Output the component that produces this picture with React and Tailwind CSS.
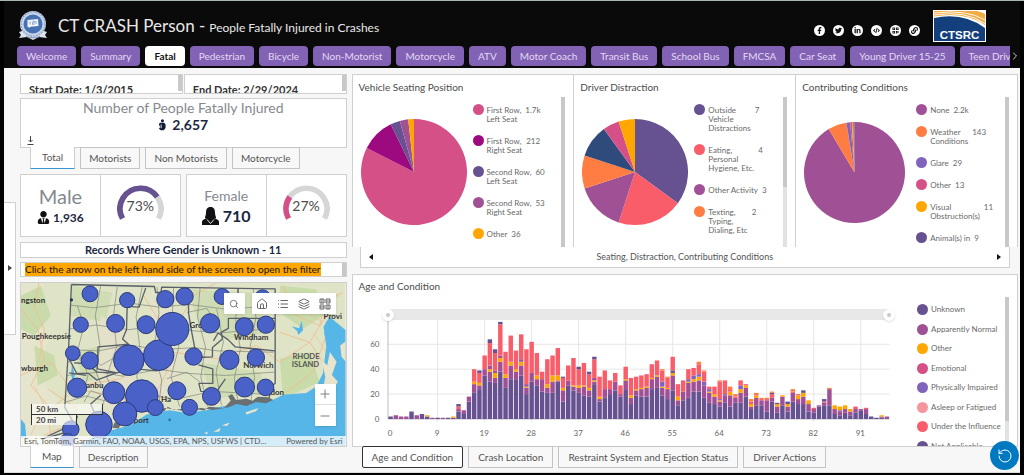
import React from "react";
import {
  FaFacebookF,
  FaTwitter,
  FaLinkedinIn,
  FaCode,
  FaQrcode,
  FaLink,
  FaUserTie,
} from "react-icons/fa";
import { Search, House, List, Layers, Plus, Minus, RotateCcw, ChevronRight } from "lucide-react";

const NAV = [
  "Welcome", "Summary", "Fatal", "Pedestrian", "Bicycle", "Non-Motorist", "Motorcycle", "ATV",
  "Motor Coach", "Transit Bus", "School Bus", "FMCSA", "Car Seat", "Young Driver 15-25", "Teen Drivers",
];

const PINK = "#d45087";
const PURPLE = "#665191";
const PLUM = "#a05195";
const RED = "#f95d6a";
const ORANGE = "#ff7c43";
const AMBER = "#ffa600";
const NAVY = "#2f4b7c";
const VIOLET = "#8064bb";

const SEATING = [
  { label: "First Row,\nLeft Seat", value: 1700, shown: "1.7k", color: PINK },
  { label: "First Row,\nRight Seat", value: 212, color: "#9d0a7f" },
  { label: "Second Row,\nLeft Seat", value: 60, color: PURPLE },
  { label: "Second Row,\nRight Seat", value: 53, color: PLUM },
  { label: "Other", value: 36, color: AMBER },
];
const DISTRACTION = [
  { label: "Outside\nVehicle\nDistractions", value: 7, color: PURPLE },
  { label: "Eating,\nPersonal\nHygiene, Etc.", value: 4, color: RED },
  { label: "Other Activity", value: 3, color: PLUM },
  { label: "Texting,\nTyping,\nDialing, Etc", value: 2, color: ORANGE },
  { value: 2, color: NAVY },
  { value: 1, color: PINK },
  { value: 1, color: AMBER },
];
const CONTRIBUTING = [
  { label: "None", value: 2200, shown: "2.2k", color: PLUM },
  { label: "Weather\nConditions", value: 143, color: ORANGE },
  { label: "Glare", value: 29, color: VIOLET },
  { label: "Other", value: 13, color: PINK },
  { label: "Visual\nObstruction(s)", value: 11, color: AMBER },
  { label: "Animal(s) in", value: 9, color: PURPLE },
];

const CONDITIONS = [
  ["Unknown", PURPLE],
  ["Apparently Normal", PLUM],
  ["Other", AMBER],
  ["Emotional", PINK],
  ["Physically Impaired", VIOLET],
  ["Asleep or Fatigued", "#f5969c"],
  ["Under the Influence", RED],
  ["Not Applicable", PURPLE],
];

/* One entry per age; each letter is a condition followed by its count. */
const AGES = (
  "d2 m3 m2 m2 d6 m3 d4 d2o1 m1 d1 m1 d1 d1o1 d6m2r2d2 d4m3 d14m4 d21m7o2r10 d24m3o2r8d2 d35m5r11 d30m8o2m3r18d3 " +
  "d29m4o4m2r14d3 d38m8o3m2r25d2 d25m8o3r18 d32m11o3r21 d32m6o2r15 d35m8o3m2r20 d20m5o1m2r28 d30m7r25 d27m5o3r18 d22m10r6 " +
  "d21m4o3r20 d21m9o5r16 d30m1o4r22 d14m9o2r8d1 d27m4r12 d23m3o1r22 d21m4o2r13d2 d19m7o1r18 d18m5o2r11d2 d28m2o1m2r15d2 " +
  "d14m2o2r16 d17m7r15 d20m4r7 d23m7r7 d18m2r7 d24m7o1r10 d12m5o2r14 d19m4o1r10 d18m6o1r10 d18m7o1r10 " +
  "d24m8o1r11 d25m9o1r12 d19m6o1v4r9h1 d16m8o1r8h1 d23m12o2d2r11 d11m4o3r10 d15m7r9 d17m12o1v2r8 d22m8o2v3r6 d22m9o3v2r8h2 " +
  "d17m10v3r8h1 d13m8o1v2r2 d12m6o2r6 d10m4o1v1r14h1 d13m6v1r11 d10m9o3r2h2 d13m4r1h2 d13m8o3v3r4 d18m7o2r1 d8m2o2r2h2 " +
  "d11m6o2r1h1 d11m4r1h1 d6m9r1h1 d14m3r3d1h1 d5m5o2d1 d11m7o1 d6m4o2d2 d14m7r1h2 d12m4o3r1 d12m6o3d2 " +
  "d6m6o3 d5m3r1 d10m1 d11m2r1d2 d11m13h1 d4m4o3 d3m3d1o3 d5m3o3 d3m3o2 d5m3r2 d7m1 d4m4r1 d2 d1 d1m1o1 m2"
).split(" ");
const BAR_COLORS = { d: PURPLE, m: PLUM, o: AMBER, r: RED, v: VIOLET, h: ORANGE };

const BUBBLES = [
  [268, 54, 24], [380, 73, 23], [495, 70, 26], [553, 62, 26], [666, 62, 24], [788, 66, 24], [240, 147, 23],
  [345, 143, 27], [437, 147, 27], [630, 143, 29], [733, 153, 27], [798, 147, 26], [216, 233, 22], [267, 255, 26],
  [385, 254, 46], [475, 239, 46], [516, 160, 50], [580, 243, 26], [688, 253, 29], [768, 246, 26], [229, 337, 29],
  [340, 352, 33], [424, 362, 49], [530, 346, 27], [634, 363, 27], [734, 335, 30], [797, 336, 25], [465, 397, 24],
  [568, 396, 24], [373, 416, 36], [295, 448, 40], [210, 462, 25], [200, 497, 22],
];

function Pie({ data, size, label }) {
  const total = data.reduce((s, d) => s + d.value, 0);
  let acc = 0;
  const point = (f) => [50 + 50 * Math.sin(2 * Math.PI * f), 50 - 50 * Math.cos(2 * Math.PI * f)];
  return (
    <svg viewBox="0 0 100 100" className={size} role="img" aria-label={label}>
      {data.map((d, i) => {
        const [x1, y1] = point(acc / total);
        acc += d.value;
        const [x2, y2] = point(acc / total);
        const large = d.value / total > 0.5 ? 1 : 0;
        return <path key={i} fill={d.color} d={`M50 50L${x1} ${y1}A50 50 0 ${large} 1 ${x2} ${y2}Z`} />;
      })}
    </svg>
  );
}

function PieCard({ title, data, size, short }) {
  return (
    <section className="flex h-[172px] min-w-0 flex-1 flex-col border-r border-[#cfcfcf] pr-2">
      <h2 className="h-[22px] pt-1 pl-[6px] text-[10px] leading-4 text-[#4c4c4c]">{title}</h2>
      <div className="flex min-h-0 flex-1">
        <div className="flex w-[120px] shrink-0 items-center pl-2">
          <Pie data={data} size={size} label={title} />
        </div>
        <ul className="flex flex-1 flex-col gap-[13px] overflow-hidden pt-[7px]">
          {data.filter((d) => d.label).map((d) => (
            <li key={d.label} className="flex shrink-0 items-start gap-[3px] text-[8px] leading-[9px] text-[#6a6a6a]">
              <span className="-mb-[2px] size-[11px] shrink-0 rounded-full" style={{ background: d.color }} />
              <span className="-mb-[2px] flex gap-1 pt-[2px]">
                <span className="whitespace-pre">{d.label}</span>
                <span>{d.shown || d.value}</span>
              </span>
            </li>
          ))}
        </ul>
        <div className="w-1 shrink-0 bg-[#e2e2e2]">
          <div className={short ? "h-3/5 bg-[#c8c8c8]" : "h-full bg-[#c8c8c8]"} />
        </div>
      </div>
    </section>
  );
}

function Gauge({ value, color }) {
  const arc = "M5.5 34.5A20.5 20.5 0 1 1 41.5 34.5";
  return (
    <div className="relative flex flex-1 items-center justify-center">
      <svg viewBox="0 0 47 47" className="mt-1 w-[47px]" fill="none" strokeWidth="5.6">
        <path d={arc} stroke="#d6d6d6" />
        <path d={arc} stroke={color} pathLength="100" strokeDasharray={`${value} 100`} />
      </svg>
      <span className="absolute text-sm text-[#4c4c4c]">{value}%</span>
    </div>
  );
}

function Tabs({ items, active, focused }) {
  return (
    <div role="tablist" className="relative -mt-px flex gap-[5px] pl-[10px]">
      {items.map((t) => {
        const on = t === active;
        return (
          <button
            key={t}
            role="tab"
            aria-selected={on}
            className={
              "h-[22px] whitespace-nowrap text-[10px] text-[#555] " +
              (focused ? "px-[9px] " : on ? "px-[11px] " : "px-2 ") +
              (on && focused
                ? "rounded-[2px] border border-[#333] bg-white"
                : on
                ? "border-x border-b border-x-[#cfcfcf] border-b-[#3b95cf] bg-white"
                : "border border-[#c4c4c4] bg-[#f8f8f8]")
            }
          >
            {t}
          </button>
        );
      })}
    </div>
  );
}

function BasemapIcon({ className }) {
  return (
    <svg viewBox="0 0 12 12" className={className} fill="none" stroke="currentColor" strokeWidth="1">
      <path d="M1 1h4v4H1zM7 1h4v4H7zM1 7h4v4H1zM7 7h4v4H7zM3 1v4M7 3h4M1 9h4M9 7v4" />
    </svg>
  );
}

function MapDrawing() {
  return (
    <svg viewBox="60 21 978 492" preserveAspectRatio="xMidYMid slice" className="absolute inset-0 size-full" role="img" aria-label="Crashes by area in Connecticut">
      <rect x="60" y="21" width="978" height="492" fill="#dfe4c6" />
      <path d="M60 21h70l-20 90 30 80-20 120 50 60-30 142H60z" fill="#e4e5cc" />
      <path d="M60 60l60-30 30 90-50 60-40-20zM100 210l60 30 10 60-60 30zM840 30l110 10 20 80-60 40-70-50z" fill="#c9dbaa" />
      <path d="M215 30l120 20-20 90-110-20zM560 40l200 10 50 120-120 20-90-40zM220 230l80-20 60 90-110 20zM600 260l180 30 30 60-170 20z" fill="#d0dcb4" />
      <path d="M300 120l90 50 20 180-60 80-60-60zM450 60l70 50 20 240-80 40z" fill="#e3e1c9" />
      <path d="M840 250l90-20 30 90-110 50z" fill="#c8dba9" />
      <g fill="none" stroke="#f3bd91" strokeWidth="3" opacity=".9">
        <path d="M60 100l50 60 20 90-40 80 50 60 10 100M115 21l-15 70 30 70-15 90M60 300l90-40 60 80 130 20 90 40M150 400l90-70 120-20 130-90 90-160 70-40" />
        <path d="M430 60l60 100 30 80-40 90-70 70M520 230l130 20 120-40 70 50 90-60 50-80M850 30l40 90 70 30 20-80 50-20M840 170l90 30 40 60M860 350l80-60 40-110M140 340l90 60-30 50-70 30" />
        <path d="M860 50l60 20 100-10M880 80l90 60M940 170l40 60M100 330l30 60-40 90" strokeWidth="2" />
      </g>
      <g fill="#56b6e8">
        <path d="M240 513l30-23 60-24 60-16 48-32 70-13 50 8 60-8 50-12 60-10 92-10 30-15 70-5 30-20 20-40 10-80-8-60 18-30 48 40v350z" />
        <path d="M60 432l12 14 4 40-16 2zM214 262l8 40-6 22-5-30zM876 152l22 6 8-22 4 28-14 14-4-12z" />
        <path d="M980 135l12 30 18 10 18 28-20 20-24-10-10-40z" />
      </g>
      <path d="M967 255l16 14 8-40 20 30-14 40 18 20-26 40-20-14 8-40zM1022 210l16-12v60l-12-14zM736 412l40-14-8 10-28 10zM640 470l22-12-5 12zM665 450l24-8-8 10zM612 474l10-5v8z" fill="#e9e4cc" />
      <g fill="none" stroke="#7d8278" strokeWidth="2">
        <path d="M210 88l70 8 106-14 90 12 90-8 110 14 148-10M206 160l80-12 100 14 60-8 120 10 90 8 166-14M203 222l90 4 90-18 100 14 100-6 70 10 168 4M196 300l100-10 70 12 110-20 90 12 110 6 148-10M196 380l60-18 80 20 80-30 110 20 110-24 180 10" />
        <path d="M300 30l-16 90 14 90-12 80 30 70-20 60M350 34l-12 90 10 90-30 90 40 90M425 34l-18 90 12 100-10 80 20 80M470 34l6 80-16 110 24 90-10 90M520 34l-4 90 20 90-24 90 26 90M600 34l-8 90 24 90-14 90 20 90M650 100l20 100-22 90 16 100M760 36l8 90-18 90 14 90-12 76M715 40l-8 90 14 90-18 90 12 76" />
        <path d="M200 260l70-20 30 30 60-34M230 90l20 60-18 70 30 80-16 60M560 110l60-12 22 34M500 310l60-20 40 30M250 380l20-34 60 20" />
      </g>
      <g fill="none" stroke="#596069" strokeWidth="4" strokeLinejoin="round">
        <path d="M212 26l250 6 4 18 16 0 2-16 342 5v285l-12 8-6 36M212 26l-8 180-12 190 38 66-100 28" />
        <path d="M436 36l-20 58-36-2-2 70-12 28 18 16-92 8-2 66 60 12-60-2-36-26-34-2M206 252l22 42 36 0 24 20 60-22 60-12 60 6 30-8" />
        <path d="M565 36v76l10 60 12 62 8 12 42-2 0-28 30-26-4-20 22-12v-30h142M640 196l14-24 30 20 22 22 120 12M595 268l43 12v44h-42l6 24 46 2 28-40M300 360l-30 26 16 38M205 292l52 8M714 38v40" />
        <path d="M130 488l94-44 6-22" />
      </g>
      <path d="M440 412l28-10 24 6 10-14 20 10 40-6 50 8 14-12 46 4 20-22-8-14 12-6 12 18 32-4 18 6 16-12 32 2 14 8-22 10-30-4-28 12-30-6-24 10-48 8-34-6-60 8-50-8-30 14zM335 458l8-18 12 4 10-10-10 26z" fill="#6a6f72" />
      <g fill="#333" fontFamily="Lato, sans-serif" fontSize="24" fontWeight="700">
        <text x="60" y="81">ngston</text>
        <text x="62" y="191">Poughkeepsie</text>
        <text x="60" y="288">wburgh</text>
        <text x="256" y="339">anbu</text>
        <text x="568" y="158">Gro</text>
        <text x="702" y="192">Windham</text>
        <text x="730" y="277">Norwich</text>
        <text x="482" y="379">Ha</text>
        <text x="812" y="359">don</text>
        <text x="400" y="442">port</text>
        <text x="972" y="129">Provi</text>
      </g>
      <g fill="#555" fontFamily="Lato, sans-serif" fontSize="23" fontWeight="700">
        <text x="878" y="250">RHODE</text>
        <text x="876" y="275">ISLAND</text>
      </g>
      <circle cx="212" cy="72" r="5" fill="#26315e" />
      <circle cx="508" cy="434" r="4" fill="#2e6fb0" />
      {BUBBLES.map(([x, y, r], i) => (
        <circle key={i} cx={x} cy={y} r={r} fill="#4a62c8" stroke="#2b3a78" strokeWidth="3" />
      ))}
    </svg>
  );
}

function AgeChart() {
  const pitch = 504 / 96;
  return (
    <svg viewBox="0 0 504 99" preserveAspectRatio="none" className="block h-[99px] w-full overflow-visible" role="img" aria-label="People by age and condition">
      <g stroke="#e6e6e6" strokeWidth="1">
        {[20, 40, 60].map((v) => (
          <path key={v} d={`M0 ${99 - v * 1.245}H504`} />
        ))}
        {[9, 18, 27, 36, 45, 54, 63, 72, 81, 90].map((i) => (
          <path key={i} d={`M${(i + 0.5) * pitch} 0V102`} />
        ))}
      </g>
      <path d="M0 0V99H504" fill="none" stroke="#bdbdbd" />
      {AGES.map((spec, i) => {
        let y = 99;
        return spec.match(/[a-z]\d+/g).map((s, j) => {
          const h = Number(s.slice(1)) * 1.245;
          y -= h;
          return <rect key={`${i}-${j}`} x={i * pitch + 0.4} y={y} width={pitch - 0.8} height={h} fill={BAR_COLORS[s[0]]} />;
        });
      })}
    </svg>
  );
}

const RANGE =
  "pointer-events-none absolute inset-x-0 top-0 h-3 w-full appearance-none bg-transparent " +
  "[&::-webkit-slider-thumb]:pointer-events-auto [&::-webkit-slider-thumb]:size-3 [&::-webkit-slider-thumb]:appearance-none " +
  "[&::-webkit-slider-thumb]:rounded-full [&::-webkit-slider-thumb]:border-4 [&::-webkit-slider-thumb]:border-white " +
  "[&::-webkit-slider-thumb]:bg-[#c9c9c9] [&::-webkit-slider-thumb]:shadow";

function Social({ icon: Icon, label }) {
  return (
    <a href="#" aria-label={label} className="flex size-[11px] items-center justify-center rounded-full bg-white text-[#111]">
      <Icon className="size-[7px]" />
    </a>
  );
}

export default function App() {
  return (
    <div className="relative min-h-screen overflow-hidden border-t border-[#a9b6b0] bg-black px-1 font-[Lato,'Open_Sans',sans-serif]">
      <header className="bg-[#0a0a0a]">
        <div className="flex h-[45px] items-center pt-1 pr-[34px] pl-[14px]">
          <svg viewBox="0 0 30 31" className="h-[31px] w-[30px] shrink-0" role="img" aria-label="Seal">
            <path d="M1 22l6-2h16l6 2-2 3 2 3-8-1-6 3-6-3-8 1 2-3z" fill="#dce4f0" />
            <circle cx="15" cy="14" r="13" fill="#c8d4e8" />
            <circle cx="15" cy="14" r="12" fill="none" stroke="#8ea3c6" strokeWidth="1.4" strokeDasharray="1.6 1.2" />
            <circle cx="15" cy="14" r="9.5" fill="#4672b4" />
            <path d="M9.500 10l10.500-1 .5 7-8 .8-1.500 1.200-.2-1-1.300.1z" fill="#f1f5fb" />
            <path d="M12 11.500v3M14.500 11.300h1.800v1.500h-1.800v1.500h1.800M18 11v3" stroke="#6c8fc4" strokeWidth=".8" fill="none" />
            <path d="M8 26.500q7 3 14 0" stroke="#7f93b5" fill="none" />
          </svg>
          <h1 className="ml-[10px] flex items-baseline gap-1 whitespace-nowrap text-[#e8e8e8]">
            <span className="text-[17px]">CT CRASH Person -</span>
            <span className="text-xs">People Fatally Injured in Crashes</span>
          </h1>
          <div className="mt-[10px] ml-auto flex gap-2">
            <Social icon={FaFacebookF} label="Facebook" />
            <Social icon={FaTwitter} label="Twitter" />
            <Social icon={FaLinkedinIn} label="LinkedIn" />
            <Social icon={FaCode} label="Embed" />
            <Social icon={FaQrcode} label="QR code" />
            <Social icon={FaLink} label="Link" />
          </div>
          <svg viewBox="0 0 53 32" className="ml-[13px] h-8 w-[53px] shrink-0" role="img" aria-label="CTSRC">
            <rect width="53" height="32" fill="#fff" />
            <path d="M1 8Q30 2 52 18V31H1z" fill="#143f7d" />
            <path d="M1 1H44Q50 2.500 52 4V15Q32 1 1 6.500z" fill="#f0ad45" />
            <path d="M1 3Q34-1 52 10M1 5Q32 0 52 13.500" stroke="#fff" strokeWidth=".9" fill="none" />
            <text x="26.500" y="29" textAnchor="middle" fill="#fff" fontFamily="Liberation Sans, sans-serif" fontWeight="700" fontSize="11.500">CTSRC</text>
          </svg>
        </div>
        <nav className="flex h-[22px] items-start pl-[13px]">
          <div className="flex min-w-0 flex-1 gap-[5px] overflow-hidden">
            {NAV.map((n) => (
              <a
                key={n}
                href="#"
                className={
                  "flex h-5 shrink-0 items-center rounded-[4px] px-[9px] text-[10px] " +
                  (n === "Fatal" ? "bg-white font-bold text-[#111]" : "bg-[#8262b5] text-[#e3d9f2]")
                }
              >
                {n}
              </a>
            ))}
          </div>
          <button aria-label="More pages" className="flex h-5 w-[10px] items-center justify-center text-[#ccc]">
            <ChevronRight className="size-3 shrink-0" />
          </button>
        </nav>
      </header>

      <main className="flex border-b border-[#ddd] bg-[#f7f7f7] pr-[2px] pb-1">
        <aside className="flex w-3 shrink-0 items-center">
          <button aria-label="Open filter" className="flex h-[133px] w-3 items-center justify-center border-y border-r border-[#cfcfcf] bg-white text-[#444]">
            <svg viewBox="0 0 4 6" className="h-[6px] w-1"><path d="M0 0l4 3-4 3z" fill="currentColor" /></svg>
          </button>
        </aside>

        <div className="ml-1 w-[32.2%] shrink-0 pt-[6px]">
          <div className="grid grid-cols-2 gap-px text-[11px] font-bold text-[#333]">
            {["Start Date: 1/3/2015", "End Date: 2/29/2024"].map((d) => (
              <div key={d} className="flex h-5 justify-between overflow-hidden border border-[#cfcfcf] bg-white pl-2">
                <span className="pt-[7px] leading-4">{d}</span>
                <span className="h-4 w-1 bg-[#c8c8c8]" />
              </div>
            ))}
          </div>

          <section className="relative mt-1 h-[50px] border border-[#cfcfcf] bg-white text-center">
            <h2 className="pt-px text-sm leading-4 text-[#85898f]">Number of People Fatally Injured</h2>
            <p className="flex items-center justify-center gap-[6px] text-sm leading-[17px] font-bold text-[#1b2740]">
              <svg viewBox="0 0 9 13" className="h-3 w-2" aria-hidden="true">
                <circle cx="5" cy="1.800" r="1.700" fill="#111b33" />
                <path d="M2 4h5l1.500 2v4L6.500 12.500H3L1 10.500 2.500 9 1 6z" fill="#111b33" />
                <path d="M3.500 6v4" stroke="#fff" />
              </svg>
              2,657
            </p>
            <button aria-label="Download" className="absolute bottom-[2px] left-[6px] text-[#444]">
              <svg viewBox="0 0 7 9" className="h-[9px] w-[7px]" fill="none" stroke="currentColor"><path d="M3.500 0v6M1.500 4l2 2 2-2M.5 8.500h6" /></svg>
            </button>
          </section>
          <Tabs items={["Total", "Motorists", "Non Motorists", "Motorcycle"]} active="Total" />

          <div className="mt-[5px] grid grid-cols-2 gap-[5px]">
            <section className="flex h-[63px] border border-[#cfcfcf] bg-white">
              <div className="flex flex-1 flex-col items-center justify-center border-r border-[#cfcfcf]">
                <h3 className="text-xl leading-6 text-[#85898f]">Male</h3>
                <p className="flex items-center gap-[3px] text-xs leading-5 font-bold text-[#1b2740]">
                  <FaUserTie className="size-[13px] text-[#111]" />1,936
                </p>
              </div>
              <Gauge value={73} color={PURPLE} />
            </section>
            <section className="flex h-[63px] border border-[#cfcfcf] bg-white">
              <div className="flex flex-1 flex-col items-center justify-center border-r border-[#cfcfcf]">
                <h3 className="text-sm leading-5 text-[#85898f]">Female</h3>
                <p className="flex items-center gap-1 text-base leading-5 font-bold text-[#1b2740]">
                  <svg viewBox="0 0 17 18" className="h-[18px] w-[17px]" aria-hidden="true">
                    <path d="M8.500 0C5 0 4 2.500 4 5.500 4 8 3 9.500 3 11l3 1h5l3-1c0-1.500-1-3-1-5.500C13 2.500 12 0 8.500 0z" fill="#111" />
                    <path d="M0 18v-3c0-2 3-3.500 5.500-4h6C14 11.500 17 13 17 15v3z" fill="#111" />
                    <path d="M5 12.500l3.500 4 3.500-4" fill="none" stroke="#fff" strokeWidth=".9" />
                  </svg>
                  710
                </p>
              </div>
              <Gauge value={27} color={PINK} />
            </section>
          </div>

          <p className="mt-[5px] h-4 border border-[#cfcfcf] bg-white text-center text-[11px] leading-[14px] font-bold text-[#1b2740]">
            Records Where Gender is Unknown - 11
          </p>
          <div className="mt-1 flex h-[15px] justify-between border border-[#cfcfcf] bg-white pl-1">
            <span className="bg-[#ffa600] text-[10px] leading-[13px] font-medium whitespace-nowrap text-[#2a1d04]">
              Click the arrow on the left hand side of the screen to open the filter
            </span>
            <span className="w-1 bg-[#c8c8c8]" />
          </div>

          <section className="relative mt-[5px] h-[165px] overflow-hidden border border-[#cfcfcf]">
            <MapDrawing />
            <div className="absolute top-[10px] right-[10px] flex gap-[7px] text-[#666]">
              <button aria-label="Search" className="flex size-[21px] items-center justify-center bg-white shadow"><Search className="size-[10px]" /></button>
              <div className="flex bg-white shadow">
                {[[House, "Home"], [List, "Legend"], [Layers, "Layers"], [BasemapIcon, "Basemap"]].map(([I, l]) => (
                  <button key={l} aria-label={l} className="flex size-[21px] items-center justify-center"><I className="size-3" /></button>
                ))}
              </div>
            </div>
            <div className="absolute right-[10px] bottom-5 flex flex-col divide-y divide-[#ddd] bg-white text-[#777] shadow">
              <button aria-label="Zoom in" className="flex size-[21px] items-center justify-center"><Plus className="size-[14px]" strokeWidth={1.6} /></button>
              <button aria-label="Zoom out" className="flex size-[21px] items-center justify-center"><Minus className="size-[14px]" strokeWidth={1.6} /></button>
            </div>
            <div className="absolute bottom-[21px] left-[10px] text-[8px] leading-[10px] font-bold text-[#444]">
              <div className="w-[72px] border-x border-b border-[#333] bg-white/60 pl-1">50 km</div>
              <div className="w-[46px] border-x border-[#333] bg-white/60 pl-1">20 mi</div>
            </div>
            <div className="absolute inset-x-0 bottom-0 flex h-[10px] justify-between bg-white/75 px-[3px] text-[8px] leading-[10px] whitespace-nowrap text-[#555]">
              <span>Esri, TomTom, Garmin, FAO, NOAA, USGS, EPA, NPS, USFWS | CTD…</span>
              <span>Powered by Esri</span>
            </div>
          </section>
          <Tabs items={["Map", "Description"]} active="Map" />
        </div>

        <div className="ml-[5px] min-w-0 flex-1 pt-[6px]">
          <div className="flex border-t border-l border-[#cfcfcf] bg-white">
            <PieCard title="Vehicle Seating Position" data={SEATING} size="size-[106px]" />
            <PieCard title="Driver Distraction" data={DISTRACTION} size="size-[106px]" short />
            <PieCard title="Contributing Conditions" data={CONTRIBUTING} size="size-[101px]" />
          </div>
          <div className="mx-2 flex h-[21px] items-center justify-between border-x border-b border-[#cfcfcf] bg-white px-2 text-[9px] text-[#555]">
            <button aria-label="Previous" className="text-[#111]"><svg viewBox="0 0 4 6" className="h-[6px] w-1"><path d="M4 0L0 3l4 3z" fill="currentColor" /></svg></button>
            Seating, Distraction, Contributing Conditions
            <button aria-label="Next" className="text-[#111]"><svg viewBox="0 0 4 6" className="h-[6px] w-1"><path d="M0 0l4 3-4 3z" fill="currentColor" /></svg></button>
          </div>

          <section className="mt-[6px] flex h-[173px] flex-col overflow-hidden border border-[#cfcfcf] bg-white">
            <h2 className="h-[22px] shrink-0 pt-[3px] pl-[6px] text-[10px] leading-4 text-[#4c4c4c]">Age and Condition</h2>
            <div className="flex min-h-0 flex-1 pr-2">
              <div className="flex min-w-0 flex-1 pt-3">
                <div className="flex h-[115px] w-[35px] shrink-0 flex-col justify-between pt-[31px] pr-2 text-right text-[8px] leading-[9px] text-[#666]">
                  <span>60</span><span>40</span><span>20</span><span>0</span>
                </div>
                <div className="min-w-0 flex-1">
                  <div className="relative h-[11px] bg-[#e8e8e8]">
                    <div className="absolute -inset-x-[6px] top-0 h-3">
                      <input type="range" aria-label="Lowest age" min="0" max="95" defaultValue="0" className={RANGE} />
                      <input type="range" aria-label="Highest age" min="0" max="95" defaultValue="95" className={RANGE} />
                    </div>
                  </div>
                  <AgeChart />
                  <div className="flex pt-[9px] text-center text-[8px] leading-[10px] text-[#666]">
                    {[0, 9, 19, 28, 37, 46, 55, 64, 73, 82, 91].map((n, i) => (
                      <span key={n} className="w-0" style={{ marginLeft: i ? `${900 / 96}%` : `${50 / 96}%` }}>
                        <span className="-ml-2 block w-4">{n}</span>
                      </span>
                    ))}
                  </div>
                </div>
              </div>
              <ul className="ml-7 flex h-[155px] w-[88px] shrink-0 flex-col justify-between self-start pt-[7px] text-[8px] text-[#6a6a6a]">
                {CONDITIONS.map(([n, c]) => (
                  <li key={n} className="flex h-[11px] items-center gap-[3px] leading-[9px] whitespace-nowrap">
                    <span className="size-[11px] shrink-0 rounded-full" style={{ background: c }} />
                    {n}
                  </li>
                ))}
              </ul>
              <div className="w-1 shrink-0 bg-[#e2e2e2]"><div className="h-5/6 bg-[#c8c8c8]" /></div>
            </div>
          </section>
          <Tabs
            items={["Age and Condition", "Crash Location", "Restraint System and Ejection Status", "Driver Actions"]}
            active="Age and Condition"
            focused
          />
        </div>
      </main>
      <button aria-label="Reset" className="absolute top-[440px] right-[5px] flex size-[29px] items-center justify-center rounded-full bg-[#0079c1] text-white">
        <RotateCcw className="size-4" strokeWidth={1.5} />
      </button>
    </div>
  );
}
